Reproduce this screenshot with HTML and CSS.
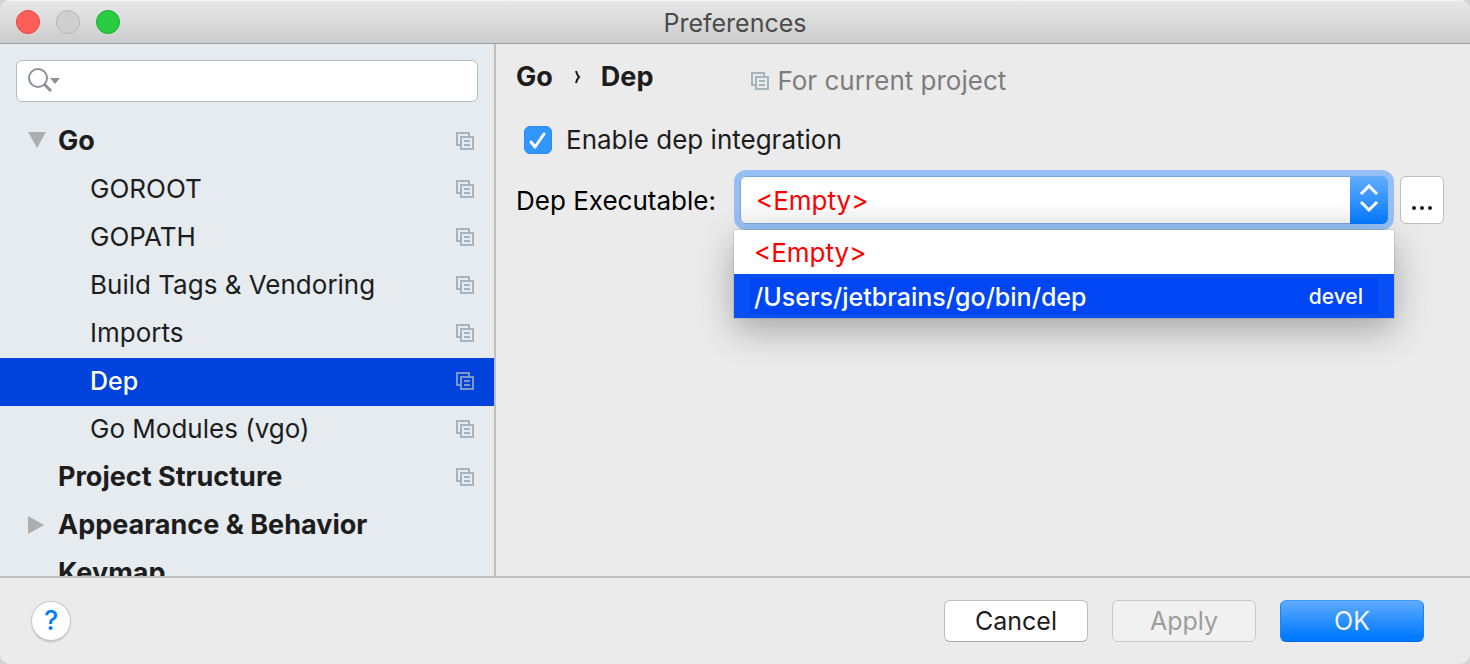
FILE: index.html
```html
<!DOCTYPE html>
<html lang="en">
<head>
    <meta charset="UTF-8">
    <meta name="viewport" content="width=device-width, initial-scale=1.0">
    <title>Preferences</title>
    <link rel="stylesheet" href="styles.css">
</head>
<body>

<svg class="defs" width="0" height="0" aria-hidden="true">
    <symbol id="project" viewBox="0 0 18 18">
        <path d="M13 4V1H1v12h3M5 5h12v12H5zM8 9h6M8 13h6" fill="none" stroke="currentColor" stroke-width="2"/>
    </symbol>
</svg>

<div class="window">
    <header class="titlebar">
        <div class="lights">
            <button class="light close" aria-label="Close"></button>
            <button class="light minimize" aria-label="Minimize" disabled></button>
            <button class="light zoom" aria-label="Zoom"></button>
        </div>
        <h1 class="title">Preferences</h1>
    </header>

    <div class="content">
        <aside class="sidebar">
            <div class="search">
                <svg class="search-icon" width="34" height="26" viewBox="0 0 34 26" aria-hidden="true">
                    <circle cx="11" cy="10" r="9" fill="none" stroke="#8b9197" stroke-width="2"/>
                    <path d="M17 16l7 7" stroke="#8b9197" stroke-width="3"/>
                    <path d="M23 10h10l-5 6z" fill="#8b9197"/>
                </svg>
                <input class="search-input" type="text" aria-label="Search settings">
            </div>
            <nav class="tree">
                <a class="item group" href="#"><svg class="arrow" width="18" height="18" viewBox="0 0 18 18"><path d="M0 0h18L9 16z"/></svg>Go<svg class="project"><use href="#project"/></svg></a>
                <a class="item" href="#">GOROOT<svg class="project"><use href="#project"/></svg></a>
                <a class="item" href="#">GOPATH<svg class="project"><use href="#project"/></svg></a>
                <a class="item" href="#">Build Tags &amp; Vendoring<svg class="project"><use href="#project"/></svg></a>
                <a class="item" href="#">Imports<svg class="project"><use href="#project"/></svg></a>
                <a class="item selected" href="#">Dep<svg class="project"><use href="#project"/></svg></a>
                <a class="item" href="#">Go Modules (vgo)<svg class="project"><use href="#project"/></svg></a>
                <a class="item group" href="#">Project Structure<svg class="project"><use href="#project"/></svg></a>
                <a class="item group" href="#"><svg class="arrow" width="18" height="18" viewBox="0 0 18 18"><path d="M0 0l16 9-16 9z"/></svg>Appearance &amp; Behavior</a>
                <a class="item group" href="#">Keymap</a>
            </nav>
        </aside>

        <main class="panel">
            <div class="heading">
                <h2 class="crumbs">Go
                    <svg class="chevron" width="8" height="14" viewBox="0 0 8 14" aria-hidden="true"><path d="M3 1q1 4 3 6q-2 2-3 6" fill="none" stroke="#1d1d1d" stroke-width="2"/></svg>
                    Dep</h2>
                <p class="scope"><svg class="project"><use href="#project"/></svg>For current project</p>
            </div>

            <div class="check-row">
                <input class="checkbox" type="checkbox" id="enableDep" checked>
                <svg class="checkmark" width="28" height="28" viewBox="0 0 28 28" aria-hidden="true"><path d="M7 16l4 5L20 8" fill="none" stroke="#fff" stroke-width="3" stroke-linecap="round" stroke-linejoin="round"/></svg>
                <label for="enableDep">Enable dep integration</label>
            </div>

            <div class="exec-row">
                <label class="exec-label" for="depExecutable">Dep Executable:</label>
                <div class="combo">
                    <select class="combo-select" id="depExecutable">
                        <option selected>&lt;Empty&gt;</option>
                        <option>/Users/jetbrains/go/bin/dep</option>
                    </select>
                    <span class="stepper">
                        <svg width="20" height="28" viewBox="0 0 20 28" aria-hidden="true"><path d="M2 10l8-8 8 8M2 18l8 8 8-8" fill="none" stroke="#fff" stroke-width="3"/></svg>
                    </span>
                    <ul class="popup">
                        <li class="option empty">&lt;Empty&gt;</li>
                        <li class="option active"><span>/Users/jetbrains/go/bin/dep</span><span class="version">devel</span></li>
                    </ul>
                </div>
                <button class="browse" aria-label="Browse">
                    <svg width="22" height="4" viewBox="0 0 22 4"><g fill="#1d1d1d"><circle cx="3" cy="2" r="2"/><circle cx="11" cy="2" r="2"/><circle cx="19" cy="2" r="2"/></g></svg>
                </button>
            </div>
        </main>
    </div>

    <footer class="footer">
        <button class="help" aria-label="Help">?</button>
        <div class="actions">
            <button class="button">Cancel</button>
            <button class="button" disabled>Apply</button>
            <button class="button primary">OK</button>
        </div>
    </footer>
</div>

</body>
</html>
```
FILE: styles.css
```css
* {
    box-sizing: border-box;
}
body {
    margin: 0;
    background: #d4d4d4;
    color: #1d1d1d;
    font-family: Inter, "Liberation Sans", sans-serif;
    font-size: 26px;
    line-height: 32px;
}
h1, h2, p, ul {
    margin: 0;
    padding: 0;
}
button, input, select {
    margin: 0;
    font: inherit;
    color: inherit;
}
.defs {
    position: absolute;
}
.window {
    display: flex;
    flex-direction: column;
    height: 100vh;
    border-radius: 10px;
    overflow: hidden;
    background: #ebebeb;
}

/* title bar */
.titlebar {
    display: grid;
    grid-template-columns: 1fr auto 1fr;
    align-items: center;
    height: 44px;
    padding: 0 16px;
    border-bottom: 1px solid #9f9f9f;
    background: linear-gradient(#e8e8e8, #cccccc);
    box-shadow: inset 0 1px #f6f6f6;
}
.lights {
    display: flex;
    gap: 16px;
}
.light {
    width: 24px;
    height: 24px;
    padding: 0;
    border: 1px solid #b4b4b4;
    border-radius: 50%;
    background: #cfcfcf;
}
.light.close {
    border-color: #e2443f;
    background: #ff5f58;
}
.light.zoom {
    border-color: #1caa2d;
    background: #29cd42;
}
.title {
    padding-top: 2px;
    font-size: 25px;
    font-weight: 400;
    color: #4b4b4b;
}

/* sidebar */
.content {
    display: flex;
    flex: 1;
    min-height: 0;
}
.sidebar {
    display: flex;
    flex-direction: column;
    gap: 16px;
    width: 496px;
    padding-top: 16px;
    border-right: 2px solid #c0c0c0;
    background: #e5ebef;
    overflow: hidden;
}
.search {
    display: flex;
    align-items: center;
    flex-shrink: 0;
    gap: 8px;
    height: 42px;
    margin: 0 16px;
    padding: 0 10px;
    border: 1px solid #b6bbbe;
    border-radius: 6px;
    background: #fff;
}
.search-input {
    flex: 1;
    min-width: 0;
    border: 0;
    outline: 0;
    background: none;
}
.item {
    display: flex;
    align-items: center;
    position: relative;
    height: 48px;
    padding: 0 20px 2px 90px;
    color: #1d1d1d;
    text-decoration: none;
}
.item.group {
    padding-left: 58px;
    font-size: 27px;
    font-weight: 700;
}
.item.selected {
    background: #0042dc;
    color: #fff;
    font-size: 25px;
    font-weight: 500;
}
.item .project {
    margin-left: auto;
}
.arrow {
    position: absolute;
    left: 28px;
    fill: #adadad;
}
.project {
    width: 18px;
    height: 18px;
    color: #a8b4bc;
}
.selected .project {
    color: #7d98c4;
}

/* settings panel */
.panel {
    flex: 1;
    min-width: 0;
    padding: 17px 26px 0 20px;
}
.heading {
    display: flex;
    align-items: flex-start;
    gap: 98px;
}
.crumbs {
    display: flex;
    align-items: center;
    gap: 20px;
    font-size: 27px;
    font-weight: 700;
}
.scope {
    display: flex;
    align-items: center;
    gap: 8px;
    margin-top: 4px;
    color: #7d7d7d;
}
.check-row {
    display: flex;
    align-items: center;
    position: relative;
    gap: 14px;
    margin: 27px 0 0 8px;
}
.checkbox {
    width: 28px;
    height: 28px;
    border: 1px solid #2a8bf5;
    border-radius: 6px;
    appearance: none;
    background: #3296ff;
}
.checkmark {
    position: absolute;
    left: 0;
    pointer-events: none;
}
.checkbox:not(:checked) + .checkmark {
    display: none;
}
.exec-row {
    display: flex;
    align-items: center;
    gap: 12px;
    margin-top: 20px;
}
.exec-label {
    width: 212px;
    padding-top: 2px;
    color: #000;
}
.combo {
    flex: 1;
    position: relative;
    height: 48px;
    border-radius: 6px;
    box-shadow: 0 0 0 6px #96c0f5;
}
.combo-select {
    display: block;
    width: 100%;
    height: 48px;
    padding: 2px 48px 0 15px;
    border: 1px solid #78a6df;
    border-radius: 6px;
    outline: 0;
    appearance: none;
    background: linear-gradient(#fff 50%, #f5f5f5);
    color: #f00;
}
.stepper {
    display: flex;
    align-items: center;
    justify-content: center;
    position: absolute;
    top: 0;
    right: 0;
    width: 38px;
    height: 48px;
    padding-bottom: 4px;
    border-radius: 0 6px 6px 0;
    background: linear-gradient(#64adfc, #0479ff);
    pointer-events: none;
}
.popup {
    position: absolute;
    top: 54px;
    left: -6px;
    right: -6px;
    background: #fff;
    box-shadow: 0 0 1px #666, 0 12px 36px rgba(0, 0, 0, 0.3);
    list-style: none;
}
.option {
    display: flex;
    align-items: center;
    justify-content: space-between;
    height: 44px;
    padding: 2px 31px 0 20px;
}
.option.empty {
    color: #f00;
}
.option.active {
    background: linear-gradient(#0046f5, #0046f5) 16px 4px / calc(100% - 32px) 36px no-repeat #0a50f7;
    color: #fff;
    font-size: 25px;
    font-weight: 500;
}
.version {
    font-size: 21px;
}
.browse {
    display: flex;
    align-items: flex-end;
    justify-content: center;
    width: 44px;
    height: 48px;
    padding: 0 0 13px;
    border: 1px solid #bdbdbd;
    border-radius: 6px;
    background: #fff;
}

/* bottom bar */
.footer {
    display: flex;
    align-items: center;
    justify-content: space-between;
    height: 88px;
    padding: 0 46px 0 32px;
    border-top: 2px solid #c0c0c0;
}
.help {
    width: 38px;
    height: 38px;
    padding: 0;
    border: 0;
    border-radius: 50%;
    background: #fff;
    box-shadow: 0 0 1px 1px #c8c8c8, 0 2px 2px #bbb;
    color: #007aff;
    font-size: 27px;
    font-weight: 500;
}
.actions {
    display: flex;
    gap: 24px;
}
.button {
    width: 144px;
    height: 42px;
    padding: 0;
    border: 1px solid #bdbdbd;
    border-bottom-color: #a8a8a8;
    border-radius: 6px;
    background: #fff;
    font-size: 25px;
}
.button:disabled {
    border-color: #c8c8c8;
    background: #f1f1f1;
    color: #9d9d9d;
}
.button.primary {
    border-color: #3e99f8 #1a83fa #0066f0;
    background: linear-gradient(#5fabfc, #007aff 90%);
    color: #f2f2f2;
}
```
